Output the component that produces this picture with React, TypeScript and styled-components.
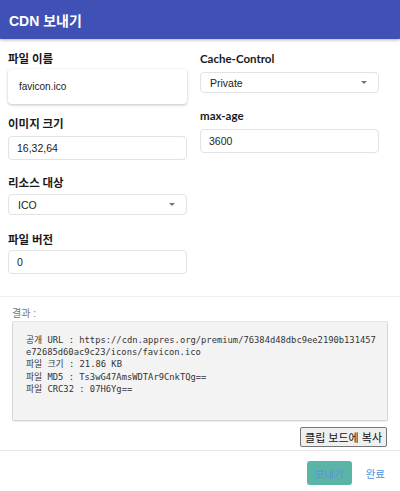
import * as React from 'react';
import styled, { createGlobalStyle } from 'styled-components';

const GlobalStyle = createGlobalStyle`
  html, body {
    margin: 0;
    padding: 0;
    background: #fff;
    font-family: "Liberation Sans", "Noto Sans CJK KR", sans-serif;
  }
`;

const Page = styled.div`
  width: 400px;
  height: 491px;
  display: flex;
  flex-direction: column;
  background: #fff;
  overflow: hidden;
`;

const Header = styled.header`
  flex-shrink: 0;
  height: 39px;
  display: flex;
  align-items: center;
  padding: 0 9px;
  background: #3f51b5;
  box-shadow: 0 1px 3px rgba(0, 0, 0, 0.3);
  color: #fff;
  font-size: 14px;
  font-weight: bold;
`;

const Form = styled.div`
  flex-shrink: 0;
  display: grid;
  grid-template-columns: 192px 192px;
  padding: 13px 8px 0 8px;
  height: 244px;
  border-bottom: 1px solid #eeeeee;
`;

const Column = styled.div`
  display: flex;
  flex-direction: column;
  padding-right: 13px;
`;

const Field = styled.div<{ $after: number }>`
  display: flex;
  flex-direction: column;
  margin-bottom: ${(p) => p.$after}px;
`;

const Label = styled.label<{ $gap: number }>`
  font-family: Lato, "Noto Sans CJK KR", sans-serif;
  font-size: 11.5px;
  font-weight: bold;
  line-height: 14px;
  color: #1a1a1a;
  margin-bottom: ${(p) => p.$gap}px;
`;

const TextField = styled.div`
  height: 35px;
  display: flex;
  align-items: center;
  padding: 0 11px;
  border-radius: 4px;
  background: #fff;
  box-shadow: 0 1px 3px rgba(0, 0, 0, 0.25);
  font-size: 10px;
  color: #222;
`;

const Input = styled.div`
  height: 22px;
  display: flex;
  align-items: center;
  padding: 0 8px;
  border: 1px solid #e2e2e2;
  border-radius: 4px;
  font-size: 10.5px;
  color: #222;
`;

const Select = styled(Input)`
  height: 19px;
  justify-content: space-between;
  padding: 0 8px 0 9px;
`;

const Caret = styled.span`
  width: 0;
  height: 0;
  border-left: 3px solid transparent;
  border-right: 3px solid transparent;
  border-top: 3px solid #777;
  margin-right: 3px;
`;

const Result = styled.section`
  flex-shrink: 0;
  padding: 8px 12px 0 12px;
  height: 145px;
  display: flex;
  flex-direction: column;
  border-bottom: 1px solid #e8e8e8;
`;

const ResultLabel = styled.div`
  font-size: 10px;
  color: #777;
  margin-bottom: 1px;
`;

const ResultBox = styled.pre`
  margin: 0;
  height: 100px;
  box-sizing: border-box;
  padding: 12px 7px 0 13px;
  background: #f3f3f3;
  border: 1px solid #d6d6d6;
  border-top-color: #e4e4e4;
  border-radius: 2px;
  box-shadow: 0 1px 1px rgba(0, 0, 0, 0.08);
  font-family: "DejaVu Sans Mono", "Noto Sans CJK KR", monospace;
  font-size: 8.8px;
  line-height: 12.2px;
  color: #333;
  white-space: pre-wrap;
  word-break: break-all;
`;

const CopyRow = styled.div`
  display: flex;
  justify-content: flex-end;
  margin-top: 6px;
`;

const CopyButton = styled.button`
  height: 20px;
  padding: 0 4px;
  margin-right: 1px;
  border: 1px solid #767676;
  border-radius: 2px;
  background: #efefef;
  font-family: "Liberation Sans", "Noto Sans CJK KR", sans-serif;
  font-size: 11px;
  color: #111;
`;

const Footer = styled.footer`
  display: flex;
  justify-content: flex-end;
  align-items: center;
  gap: 14px;
  padding: 10px 15px 0 0;
`;

const SendButton = styled.button`
  width: 45px;
  height: 24px;
  border: none;
  border-radius: 3px;
  background: #5bb5a6;
  color: #5b8fe6;
  font-family: "Liberation Sans", "Noto Sans CJK KR", sans-serif;
  font-size: 10.5px;
`;

const LinkButton = styled.button`
  border: none;
  background: none;
  padding: 0;
  color: #4a90e2;
  font-family: "Liberation Sans", "Noto Sans CJK KR", sans-serif;
  font-size: 10.5px;
`;

const resultText = [
  '공개 URL : https://cdn.appres.org/premium/76384d48dbc9ee2190b131457e72685d60ac9c23/icons/favicon.ico',
  '파일 크기 : 21.86 KB',
  '파일 MD5 : Ts3wG47AmsWDTAr9CnkTQg==',
  '파일 CRC32 : 07H6Yg==',
].join('\n');

export default function App() {
  return (
    <Page>
      <GlobalStyle />
      <Header>CDN 보내기</Header>
      <Form>
        <Column>
          <Field $after={13}>
            <Label $gap={3}>파일 이름</Label>
            <TextField>favicon.ico</TextField>
          </Field>
          <Field $after={16}>
            <Label $gap={5}>이미지 크기</Label>
            <Input>16,32,64</Input>
          </Field>
          <Field $after={18}>
            <Label $gap={4}>리소스 대상</Label>
            <Select>
              ICO
              <Caret />
            </Select>
          </Field>
          <Field $after={0}>
            <Label $gap={3}>파일 버전</Label>
            <Input>0</Input>
          </Field>
        </Column>
        <Column>
          <Field $after={16}>
            <Label $gap={6}>Cache-Control</Label>
            <Select>
              Private
              <Caret />
            </Select>
          </Field>
          <Field $after={0}>
            <Label $gap={6}>max-age</Label>
            <Input>3600</Input>
          </Field>
        </Column>
      </Form>
      <Result>
        <ResultLabel>결과 :</ResultLabel>
        <ResultBox>{resultText}</ResultBox>
        <CopyRow>
          <CopyButton>클립 보드에 복사</CopyButton>
        </CopyRow>
      </Result>
      <Footer>
        <SendButton>보내기</SendButton>
        <LinkButton>완료</LinkButton>
      </Footer>
    </Page>
  );
}
